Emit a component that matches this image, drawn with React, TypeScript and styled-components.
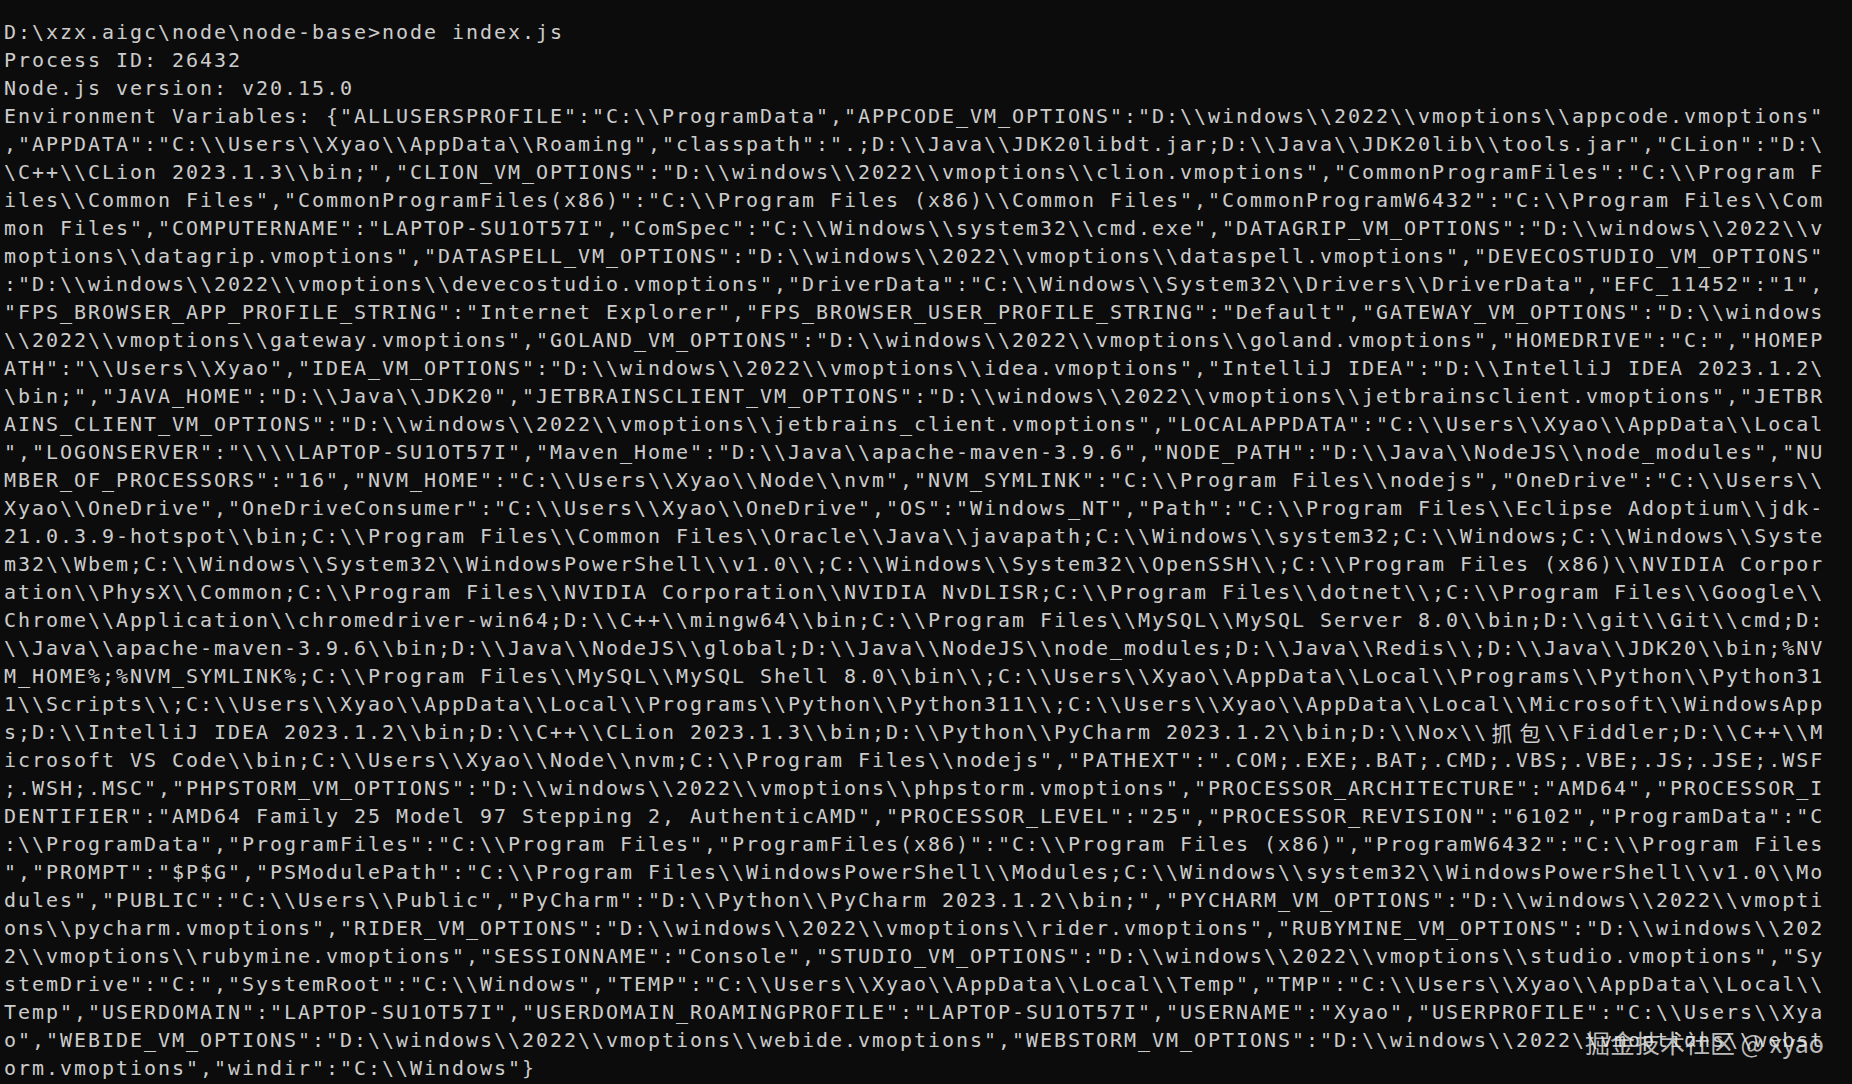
import React from "react";
import styled, { createGlobalStyle } from "styled-components";

const GlobalStyle = createGlobalStyle`
  html, body {
    margin: 0;
    padding: 0;
    background: #0c0c0c;
    overflow: hidden;
  }
`;

const Terminal = styled.main`
  position: relative;
  box-sizing: border-box;
  width: 1852px;
  height: 1084px;
  padding: 18px 0 0 4px;
  background: #0c0c0c;
  color: #cccccc;
  font-family: "DejaVu Sans Mono", "Liberation Mono", monospace;
  font-size: 20px;
  letter-spacing: 1.96px;
  overflow: hidden;
`;

const Line = styled.div`
  height: 28px;
  line-height: 28px;
  white-space: pre;
`;

const Wide = styled.span`
  display: inline-block;
  width: 28px;
  letter-spacing: 0;
  text-align: center;
  font-family: "Noto Sans CJK SC", sans-serif;
  font-size: 21px;
  vertical-align: top;
`;

const Watermark = styled.div`
  position: absolute;
  right: 28px;
  bottom: 27px;
  font-family: "Noto Sans CJK SC", "Noto Sans", sans-serif;
  font-size: 25px;
  line-height: 30px;
  letter-spacing: 0;
  color: rgba(235, 235, 235, 0.78);
  white-space: pre;
`;

const lines: string[] = [
  "D:\\xzx.aigc\\node\\node-base>node index.js",
  "Process ID: 26432",
  "Node.js version: v20.15.0",
  String.raw`Environment Variables: {"ALLUSERSPROFILE":"C:\\ProgramData","APPCODE_VM_OPTIONS":"D:\\windows\\2022\\vmoptions\\appcode.vmoptions"`,
  String.raw`,"APPDATA":"C:\\Users\\Xyao\\AppData\\Roaming","classpath":".;D:\\Java\\JDK20libdt.jar;D:\\Java\\JDK20lib\\tools.jar","CLion":"D:` + "\\",
  String.raw`\C++\\CLion 2023.1.3\\bin;","CLION_VM_OPTIONS":"D:\\windows\\2022\\vmoptions\\clion.vmoptions","CommonProgramFiles":"C:\\Program F`,
  String.raw`iles\\Common Files","CommonProgramFiles(x86)":"C:\\Program Files (x86)\\Common Files","CommonProgramW6432":"C:\\Program Files\\Com`,
  String.raw`mon Files","COMPUTERNAME":"LAPTOP-SU1OT57I","ComSpec":"C:\\Windows\\system32\\cmd.exe","DATAGRIP_VM_OPTIONS":"D:\\windows\\2022\\v`,
  String.raw`moptions\\datagrip.vmoptions","DATASPELL_VM_OPTIONS":"D:\\windows\\2022\\vmoptions\\dataspell.vmoptions","DEVECOSTUDIO_VM_OPTIONS"`,
  String.raw`:"D:\\windows\\2022\\vmoptions\\devecostudio.vmoptions","DriverData":"C:\\Windows\\System32\\Drivers\\DriverData","EFC_11452":"1",`,
  String.raw`"FPS_BROWSER_APP_PROFILE_STRING":"Internet Explorer","FPS_BROWSER_USER_PROFILE_STRING":"Default","GATEWAY_VM_OPTIONS":"D:\\windows`,
  String.raw`\\2022\\vmoptions\\gateway.vmoptions","GOLAND_VM_OPTIONS":"D:\\windows\\2022\\vmoptions\\goland.vmoptions","HOMEDRIVE":"C:","HOMEP`,
  String.raw`ATH":"\\Users\\Xyao","IDEA_VM_OPTIONS":"D:\\windows\\2022\\vmoptions\\idea.vmoptions","IntelliJ IDEA":"D:\\IntelliJ IDEA 2023.1.2` + "\\",
  String.raw`\bin;","JAVA_HOME":"D:\\Java\\JDK20","JETBRAINSCLIENT_VM_OPTIONS":"D:\\windows\\2022\\vmoptions\\jetbrainsclient.vmoptions","JETBR`,
  String.raw`AINS_CLIENT_VM_OPTIONS":"D:\\windows\\2022\\vmoptions\\jetbrains_client.vmoptions","LOCALAPPDATA":"C:\\Users\\Xyao\\AppData\\Local`,
  String.raw`","LOGONSERVER":"\\\\LAPTOP-SU1OT57I","Maven_Home":"D:\\Java\\apache-maven-3.9.6","NODE_PATH":"D:\\Java\\NodeJS\\node_modules","NU`,
  String.raw`MBER_OF_PROCESSORS":"16","NVM_HOME":"C:\\Users\\Xyao\\Node\\nvm","NVM_SYMLINK":"C:\\Program Files\\nodejs","OneDrive":"C:\\Users\\`,
  String.raw`Xyao\\OneDrive","OneDriveConsumer":"C:\\Users\\Xyao\\OneDrive","OS":"Windows_NT","Path":"C:\\Program Files\\Eclipse Adoptium\\jdk-`,
  String.raw`21.0.3.9-hotspot\\bin;C:\\Program Files\\Common Files\\Oracle\\Java\\javapath;C:\\Windows\\system32;C:\\Windows;C:\\Windows\\Syste`,
  String.raw`m32\\Wbem;C:\\Windows\\System32\\WindowsPowerShell\\v1.0\\;C:\\Windows\\System32\\OpenSSH\\;C:\\Program Files (x86)\\NVIDIA Corpor`,
  String.raw`ation\\PhysX\\Common;C:\\Program Files\\NVIDIA Corporation\\NVIDIA NvDLISR;C:\\Program Files\\dotnet\\;C:\\Program Files\\Google\\`,
  String.raw`Chrome\\Application\\chromedriver-win64;D:\\C++\\mingw64\\bin;C:\\Program Files\\MySQL\\MySQL Server 8.0\\bin;D:\\git\\Git\\cmd;D:`,
  String.raw`\\Java\\apache-maven-3.9.6\\bin;D:\\Java\\NodeJS\\global;D:\\Java\\NodeJS\\node_modules;D:\\Java\\Redis\\;D:\\Java\\JDK20\\bin;%NV`,
  String.raw`M_HOME%;%NVM_SYMLINK%;C:\\Program Files\\MySQL\\MySQL Shell 8.0\\bin\\;C:\\Users\\Xyao\\AppData\\Local\\Programs\\Python\\Python31`,
  String.raw`1\\Scripts\\;C:\\Users\\Xyao\\AppData\\Local\\Programs\\Python\\Python311\\;C:\\Users\\Xyao\\AppData\\Local\\Microsoft\\WindowsApp`,
  String.raw`s;D:\\IntelliJ IDEA 2023.1.2\\bin;D:\\C++\\CLion 2023.1.3\\bin;D:\\Python\\PyCharm 2023.1.2\\bin;D:\\Nox\\抓包\\Fiddler;D:\\C++\\M`,
  String.raw`icrosoft VS Code\\bin;C:\\Users\\Xyao\\Node\\nvm;C:\\Program Files\\nodejs","PATHEXT":".COM;.EXE;.BAT;.CMD;.VBS;.VBE;.JS;.JSE;.WSF`,
  String.raw`;.WSH;.MSC","PHPSTORM_VM_OPTIONS":"D:\\windows\\2022\\vmoptions\\phpstorm.vmoptions","PROCESSOR_ARCHITECTURE":"AMD64","PROCESSOR_I`,
  String.raw`DENTIFIER":"AMD64 Family 25 Model 97 Stepping 2, AuthenticAMD","PROCESSOR_LEVEL":"25","PROCESSOR_REVISION":"6102","ProgramData":"C`,
  String.raw`:\\ProgramData","ProgramFiles":"C:\\Program Files","ProgramFiles(x86)":"C:\\Program Files (x86)","ProgramW6432":"C:\\Program Files`,
  String.raw`","PROMPT":"$P$G","PSModulePath":"C:\\Program Files\\WindowsPowerShell\\Modules;C:\\Windows\\system32\\WindowsPowerShell\\v1.0\\Mo`,
  String.raw`dules","PUBLIC":"C:\\Users\\Public","PyCharm":"D:\\Python\\PyCharm 2023.1.2\\bin;","PYCHARM_VM_OPTIONS":"D:\\windows\\2022\\vmopti`,
  String.raw`ons\\pycharm.vmoptions","RIDER_VM_OPTIONS":"D:\\windows\\2022\\vmoptions\\rider.vmoptions","RUBYMINE_VM_OPTIONS":"D:\\windows\\202`,
  String.raw`2\\vmoptions\\rubymine.vmoptions","SESSIONNAME":"Console","STUDIO_VM_OPTIONS":"D:\\windows\\2022\\vmoptions\\studio.vmoptions","Sy`,
  String.raw`stemDrive":"C:","SystemRoot":"C:\\Windows","TEMP":"C:\\Users\\Xyao\\AppData\\Local\\Temp","TMP":"C:\\Users\\Xyao\\AppData\\Local\\`,
  String.raw`Temp","USERDOMAIN":"LAPTOP-SU1OT57I","USERDOMAIN_ROAMINGPROFILE":"LAPTOP-SU1OT57I","USERNAME":"Xyao","USERPROFILE":"C:\\Users\\Xya`,
  String.raw`o","WEBIDE_VM_OPTIONS":"D:\\windows\\2022\\vmoptions\\webide.vmoptions","WEBSTORM_VM_OPTIONS":"D:\\windows\\2022\\vmoptions\\webst`,
  String.raw`orm.vmoptions","windir":"C:\\Windows"}`,
];

const CJK = /([\u3400-\u9fff])/;

function renderLine(text: string) {
  return text.split(CJK).map((part, i) =>
    CJK.test(part) ? <Wide key={i}>{part}</Wide> : <React.Fragment key={i}>{part}</React.Fragment>
  );
}

export default function App() {
  return (
    <>
      <GlobalStyle />
      <Terminal>
        {lines.map((l, i) => (
          <Line key={i}>{renderLine(l)}</Line>
        ))}
        <Watermark>掘金技术社区 @ xyao</Watermark>
      </Terminal>
    </>
  );
}
